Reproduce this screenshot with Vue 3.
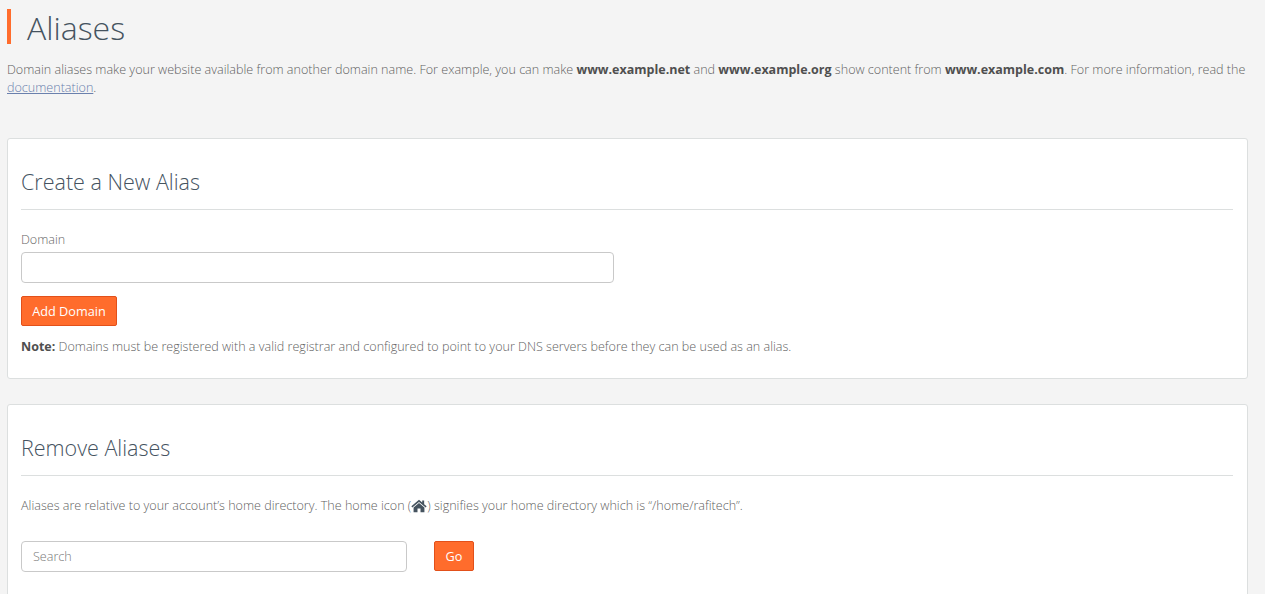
<script setup>
const title = 'Aliases'
</script>

<template>
  <main class="page">
    <h1 class="title">{{ title }}</h1>
    <p class="intro">
      Domain aliases make your website available from another domain name. For example, you can make
      <strong>www.example.net</strong> and <strong>www.example.org</strong> show content from
      <strong>www.example.com</strong>. For more information, read the
      <a href="#" class="doc">documentation</a>.
    </p>

    <section class="panel first">
      <h2>Create a New Alias</h2>
      <label class="label" for="domain">Domain</label>
      <input id="domain" class="field domain" type="text" />
      <button class="btn add" type="button">Add Domain</button>
      <p class="note">
        <strong>Note:</strong> Domains must be registered with a valid registrar and configured to point to your DNS servers before they can be used as an alias.
      </p>
    </section>

    <section class="panel second">
      <h2>Remove Aliases</h2>
      <p class="rel">
        Aliases are relative to your account’s home directory. The home icon (<svg class="home" viewBox="0 0 18 15" width="16" height="14" aria-hidden="true"><path d="M9 0.6 L0.4 7.9 L1.5 9.2 L9 3 L16.5 9.2 L17.6 7.9 L14.8 5.5 V1.2 H12.6 V3.6 Z" /><path d="M9 4.2 L2.9 9.2 V14.6 H7.3 V10.4 H10.7 V14.6 H15.1 V9.2 Z" /></svg>) signifies your home directory which is “/home/rafitech”.
      </p>
      <div class="search">
        <input class="field query" type="text" placeholder="Search" />
        <button class="btn go" type="button">Go</button>
      </div>
    </section>
  </main>
</template>

<style>
html, body { margin: 0; background: #f4f4f4; overflow: hidden; }
</style>

<style scoped>
.page {
  box-sizing: border-box;
  width: 1265px;
  height: 594px;
  overflow: hidden;
  padding: 9px 17px 0 7px;
  font-family: "Open Sans", "Liberation Sans", sans-serif;
  font-size: 12.57px;
  font-weight: 300;
  color: #5f5f5f;
}
.title {
  margin: 0;
  height: 35px;
  border-left: 4px solid #ff6c2c;
  padding-left: 16px;
  font-size: 32px;
  line-height: 38px;
  font-weight: 300;
  color: #45535f;
}
.intro {
  margin: 17px 0 0;
  line-height: 18px;
}
.intro strong, .note strong { color: #4f4f4f; font-weight: 700; font-size: 12.5px; }
.doc { color: #6a80ad; text-decoration: underline; }
.panel {
  box-sizing: border-box;
  background: #fff;
  border: 1px solid #dcdfdf;
  border-radius: 3px;
  padding: 0 14px 0 13px;
}
.first { margin-top: 41px; height: 241px; }
.second { margin-top: 25px; height: 240px; }
h2 {
  margin: 0;
  height: 71px;
  box-sizing: border-box;
  padding-top: 28px;
  border-bottom: 1px solid #dcdfdf;
  font-size: 21.5px;
  line-height: 30px;
  font-weight: 300;
  color: #45535f;
}
.label {
  display: block;
  margin-top: 21px;
  line-height: 18px;
  color: #666;
}
.field {
  display: block;
  box-sizing: border-box;
  background: #fff;
  border: 1px solid #c9c9c9;
  border-radius: 4px;
  height: 31px;
  padding: 0 11px;
  font: 300 12.57px "Open Sans", sans-serif;
  outline: none;
}
.field::placeholder { color: #777; opacity: 1; }
.domain { width: 593px; margin-top: 3px; }
.btn {
  box-sizing: border-box;
  background: #ff6c2c;
  border: 1px solid #e2501a;
  border-radius: 2px;
  color: #fff;
  height: 30px;
  font: 400 12.7px "Open Sans", sans-serif;
  padding: 0;
}
.add { display: block; width: 96px; margin-top: 13px; }
.note { margin: 12px 0 0; line-height: 18px; }
.rel { margin: 21px 0 0; line-height: 18px; }
.home { vertical-align: -3px; fill: #45535f; }
.search { display: flex; align-items: flex-start; margin-top: 26px; }
.query { width: 386px; }
.go { width: 40px; margin-left: 27px; }
</style>
